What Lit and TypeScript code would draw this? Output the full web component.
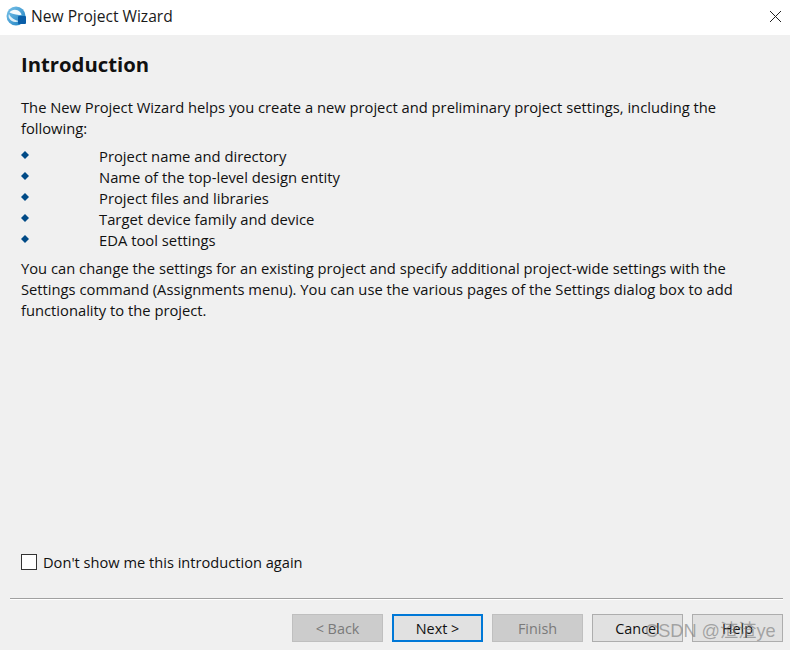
import { LitElement, html, css } from "lit";
import { customElement } from "lit/decorators.js";

@customElement("app-root")
export class AppRoot extends LitElement {
  static styles = css`
    :host {
      display: flex;
      flex-direction: column;
      width: 790px;
      height: 650px;
      position: relative;
      overflow: hidden;
      background: #f0f0f0;
      font-family: "Open Sans", "Noto Sans", sans-serif;
      font-size: 14.74px;
      color: #111;
    }
    .titlebar {
      box-sizing: border-box;
      height: 35px;
      flex: none;
      background: #fff;
      display: flex;
      align-items: center;
      padding: 0 8px 3px 6px;
      gap: 5px;
      font-size: 15.6px;
    }
    .titlebar .name { flex: 1; color: #1a1a1a; }
    .logo { width: 20px; height: 20px; flex: none; }
    .close { width: 13px; height: 13px; flex: none; }
    .main {
      flex: 1;
      display: flex;
      flex-direction: column;
      padding: 15px 21px 0;
      min-height: 0;
    }
    h1 {
      margin: 0;
      font-size: 20.3px;
      line-height: 28px;
      font-weight: 700;
      color: #111;
    }
    p { margin: 0; line-height: 21px; }
    .intro { margin-top: 19px; }
    ul {
      list-style: none;
      margin: 7px 0 0;
      padding: 0;
    }
    li {
      display: flex;
      height: 21px;
      line-height: 21px;
      font-size: 14.8px;
    }
    .bullet {
      width: 8px;
      height: 8px;
      margin-top: 5px;
      flex: none;
      color: #004a86;
    }
    .item { margin-left: 70px; }
    .outro { margin-top: 7px; }
    .spacer { flex: 1; }
    .check {
      display: flex;
      align-items: center;
      gap: 6px;
      margin-bottom: 26px;
      font-size: 14.63px;
    }
    .box {
      width: 14px;
      height: 14px;
      border: 1px solid #333;
      background: #fff;
      flex: none;
    }
    .divider {
      height: 1px;
      background: #a0a0a0;
      border-bottom: 1px solid #fff;
      margin: 0 7px 0 10px;
      flex: none;
    }
    .buttons {
      flex: none;
      display: flex;
      justify-content: flex-end;
      gap: 9px;
      padding: 14px 7px 8px 0;
    }
    .btn {
      box-sizing: border-box;
      width: 91px;
      height: 28px;
      display: flex;
      align-items: center;
      justify-content: center;
      border: 1px solid #adadad;
      background: #e1e1e1;
      font-size: 14.4px;
      color: #111;
    }
    .btn.disabled { background: #cccccc; border-color: #bfbfbf; color: #7a7a7a; }
    .btn.default { border: 2px solid #0078d7; background: #e1e1e1; }
    .watermark {
      position: absolute;
      left: 645px;
      top: 618px;
      font-size: 18.2px;
      line-height: 26px;
      color: rgba(120, 120, 120, 0.6);
      font-family: "Liberation Sans", "Noto Sans CJK SC", sans-serif;
      white-space: nowrap;
    }
  `;

  render() {
    const items = [
      "Project name and directory",
      "Name of the top-level design entity",
      "Project files and libraries",
      "Target device family and device",
      "EDA tool settings",
    ];
    return html`
      <div class="titlebar">
        <svg class="logo" viewBox="0 0 20 20">
          <defs>
            <linearGradient id="g" x1="0" y1="0" x2="1" y2="1">
              <stop offset="0" stop-color="#7cc4ea" />
              <stop offset="1" stop-color="#1b7fc0" />
            </linearGradient>
          </defs>
          <circle cx="10" cy="10" r="9.5" fill="url(#g)" />
          <path d="M3.5 6.500C6 3 11 3 14 6c1 1 1.500 2 1.500 3-3 0-8-.5-12-2.500z" fill="#f4fafd" />
          <path d="M3 8c2 4 6 6.500 10 7-3 2-8 1-10-3-.6-1.500-.6-2.800 0-4z" fill="#dff0f9" />
          <rect x="12" y="10" width="8" height="8" rx="1" fill="#0a5ea8" />
        </svg>
        <span class="name">New Project Wizard</span>
        <svg class="close" viewBox="0 0 13 13">
          <path d="M1 1l11 11M12 1L1 12" stroke="#222" stroke-width="1" fill="none" />
        </svg>
      </div>
      <div class="main">
        <h1>Introduction</h1>
        <p class="intro">
          The New Project Wizard helps you create a new project and preliminary project settings, including the following:
        </p>
        <ul>
          ${items.map(
            (t) => html`<li>
              <svg class="bullet" viewBox="0 0 8 8"><path d="M4 0l4 4-4 4-4-4z" fill="currentColor" /></svg>
              <span class="item">${t}</span>
            </li>`
          )}
        </ul>
        <p class="outro">
          You can change the settings for an existing project and specify additional project-wide settings with the Settings command (Assignments menu). You can use the various pages of the Settings dialog box to add functionality to the project.
        </p>
        <div class="spacer"></div>
        <div class="check"><span class="box"></span><span>Don't show me this introduction again</span></div>
      </div>
      <div class="divider"></div>
      <div class="buttons">
        <div class="btn disabled">&lt; Back</div>
        <div class="btn default">Next &gt;</div>
        <div class="btn disabled">Finish</div>
        <div class="btn">Cancel</div>
        <div class="btn">Help</div>
      </div>
      <div class="watermark">CSDN @渣渣ye</div>
    `;
  }
}
